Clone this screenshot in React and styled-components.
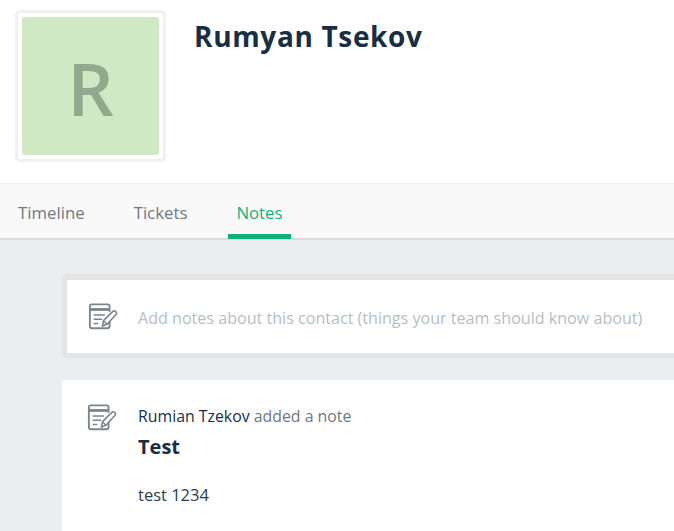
import styled, { createGlobalStyle } from 'styled-components';

const GlobalStyle = createGlobalStyle`
  html, body {
    margin: 0;
    padding: 0;
    height: 100%;
    overflow: hidden;
    background: #ebedef;
  }
  body {
    font-family: "Open Sans", "Noto Sans", sans-serif;
  }
`;

const Page = styled.div`
  width: 674px;
  height: 531px;
  overflow: hidden;
  background: #ebedef;
`;

const Header = styled.header`
  display: flex;
  height: 183px;
  box-sizing: border-box;
  padding: 10px 15px 0;
  gap: 28px;
  background: #fff;
`;

const AvatarFrame = styled.div`
  width: 151px;
  height: 152px;
  box-sizing: border-box;
  padding: 4px;
  border: 3px solid #f0f1f1;
  border-radius: 5px;
  background: #fff;
`;

const Avatar = styled.div`
  display: flex;
  align-items: center;
  justify-content: center;
  height: 100%;
  padding-top: 2px;
  box-sizing: border-box;
  border-radius: 3px;
  background: #cfe9c5;
  color: #92a98d;
  font-size: 73px;
  font-weight: 600;
  line-height: 1;
`;

const Name = styled.h1`
  margin: 6px 0 0;
  color: #182f43;
  font-size: 28px;
  font-weight: 700;
  line-height: 40px;
  letter-spacing: 0.65px;
`;

const Tabs = styled.nav`
  display: flex;
  height: 57px;
  box-sizing: border-box;
  padding-left: 10px;
  gap: 33px;
  background: #f9f9f9;
  border-top: 1px solid #f0f1f1;
  border-bottom: 2px solid #d9dbdc;
`;

const Tab = styled.a`
  box-sizing: border-box;
  height: 55px;
  padding: 18px 8px 0;
  color: ${(p) => (p.$active ? '#12b076' : '#6f7881')};
  font-size: 16.8px;
  line-height: 22px;
  border-bottom: 5px solid ${(p) => (p.$active ? '#12b076' : 'transparent')};
`;

const Feed = styled.main`
  display: flex;
  flex-direction: column;
  gap: 22px;
  width: 680px;
  padding: 34px 0 0 62px;
`;

const Composer = styled.div`
  display: flex;
  align-items: center;
  height: 84px;
  box-sizing: border-box;
  padding-left: 21px;
  gap: 20px;
  background: #fff;
  border: 5px solid #e2e4e6;
  border-width: 6px 0 5px 5px;
  border-radius: 6px 0 0 6px;
  background-clip: padding-box;
`;

const Placeholder = styled.span`
  margin-top: 3px;
  color: #b6bec5;
  font-size: 16.1px;
  line-height: 22px;
  white-space: nowrap;
`;

const NoteCard = styled.article`
  display: flex;
  height: 160px;
  box-sizing: border-box;
  padding: 24px 0 0 25px;
  gap: 21px;
  background: #fff;
  border-radius: 4px 0 0 0;
`;

const NoteBody = styled.div`
  display: flex;
  flex-direction: column;
`;

const Meta = styled.div`
  color: #6f7881;
  font-size: 15.85px;
  line-height: 24px;
`;

const Author = styled.span`
  color: #182f43;
  font-weight: 500;
`;

const NoteTitle = styled.h2`
  margin: 5px 0 0;
  color: #182f43;
  font-size: 20px;
  font-weight: 700;
  line-height: 27px;
`;

const NoteText = styled.p`
  margin: 24px 0 0;
  color: #2c3e50;
  font-size: 16.5px;
  line-height: 22px;
`;

function NoteIcon() {
  return (
    <svg width="30" height="27" viewBox="0 0 32 28" fill="none" stroke="#7b858e" strokeWidth="2" style={{ flex: 'none' }}>
      <path d="M23 15v9.5a2 2 0 0 1-2 2H4a2 2 0 0 1-2-2V3a2 2 0 0 1 2-2h17a2 2 0 0 1 2 2v6" />
      <path d="M2 6.5h21" strokeWidth="3" />
      <path d="M6 12.5h12M6 17h9M6 21.5h5" strokeWidth="1.6" />
      <path d="M15.5 24l1-5.5L26.5 8.5a1.9 1.9 0 0 1 2.7 0l.6.6a1.9 1.9 0 0 1 0 2.7L20.5 22z" fill="#fff" strokeWidth="1.7" />
      <path d="M17 19l3 3" strokeWidth="1.4" />
    </svg>
  );
}

function App() {
  return (
    <Page>
      <GlobalStyle />
      <Header>
        <AvatarFrame>
          <Avatar>R</Avatar>
        </AvatarFrame>
        <Name>Rumyan Tsekov</Name>
      </Header>
      <Tabs>
        <Tab>Timeline</Tab>
        <Tab>Tickets</Tab>
        <Tab $active>Notes</Tab>
      </Tabs>
      <Feed>
        <Composer>
          <NoteIcon />
          <Placeholder>Add notes about this contact (things your team should know about)</Placeholder>
        </Composer>
        <NoteCard>
          <NoteIcon />
          <NoteBody>
            <Meta>
              <Author>Rumian Tzekov</Author> added a note
            </Meta>
            <NoteTitle>Test</NoteTitle>
            <NoteText>test 1234</NoteText>
          </NoteBody>
        </NoteCard>
      </Feed>
    </Page>
  );
}

export default App;
